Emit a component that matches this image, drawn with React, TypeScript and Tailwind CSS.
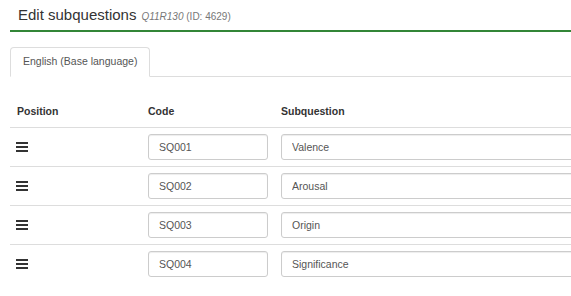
const rows = [
  { code: "SQ001", text: "Valence" },
  { code: "SQ002", text: "Arousal" },
  { code: "SQ003", text: "Origin" },
  { code: "SQ004", text: "Significance" },
];

function Bars() {
  return (
    <svg width="12" height="10" viewBox="0 0 12 10" className="block">
      <rect x="0" y="0" width="12" height="2" fill="#333" />
      <rect x="0" y="4" width="12" height="2" fill="#333" />
      <rect x="0" y="8" width="12" height="2" fill="#333" />
    </svg>
  );
}

export default function App() {
  return (
    <div className="w-[571px] h-[296px] overflow-hidden bg-white font-['Liberation_Sans',Arial,sans-serif] text-[#333]">
      <div className="w-[700px] pl-[10px]">
        {/* Title */}
        <div className="border-b-2 border-[#328637] pl-[8px] pt-[6px] pb-[6px] flex items-baseline gap-[5px]">
          <h3 className="text-[15px] leading-[18px]">Edit subquestions</h3>
          <span className="text-[10px] text-[#777]">
            <i>Q11R130</i> (ID: 4629)
          </span>
        </div>

        {/* Tabs */}
        <div className="mt-[15px] flex border-b border-[#ddd]">
          <div className="-mb-px h-[30px] px-[12px] flex items-center border border-[#ddd] border-b-white bg-white rounded-t-[4px] text-[10.5px] text-[#555]">
            English (Base language)
          </div>
        </div>

        {/* Table */}
        <div className="mt-[21px] text-[10.5px]">
          <div className="grid grid-cols-[130px_133px_1fr] font-bold h-[29px] items-start pt-[6px]">
            <div className="px-[7px]">Position</div>
            <div className="px-[8px]">Code</div>
            <div className="px-[8px]">Subquestion</div>
          </div>
          {rows.map((r) => (
            <div
              key={r.code}
              className="grid grid-cols-[130px_133px_1fr] items-center border-t border-[#ddd] py-[6px]"
            >
              <div className="px-[6px]">
                <Bars />
              </div>
              <div className="px-[8px]">
                <input
                  readOnly
                  value={r.code}
                  className="w-[120px] h-[26px] px-[10px] border border-[#ccc] rounded-[3px] text-[10.5px] text-[#555] outline-none shadow-[inset_0_1px_1px_rgba(0,0,0,0.075)]"
                />
              </div>
              <div className="px-[8px]">
                <input
                  readOnly
                  value={r.text}
                  className="w-full h-[26px] px-[10px] border border-[#ccc] rounded-[3px] text-[10.5px] text-[#555] outline-none shadow-[inset_0_1px_1px_rgba(0,0,0,0.075)]"
                />
              </div>
            </div>
          ))}
        </div>
      </div>
    </div>
  );
}
